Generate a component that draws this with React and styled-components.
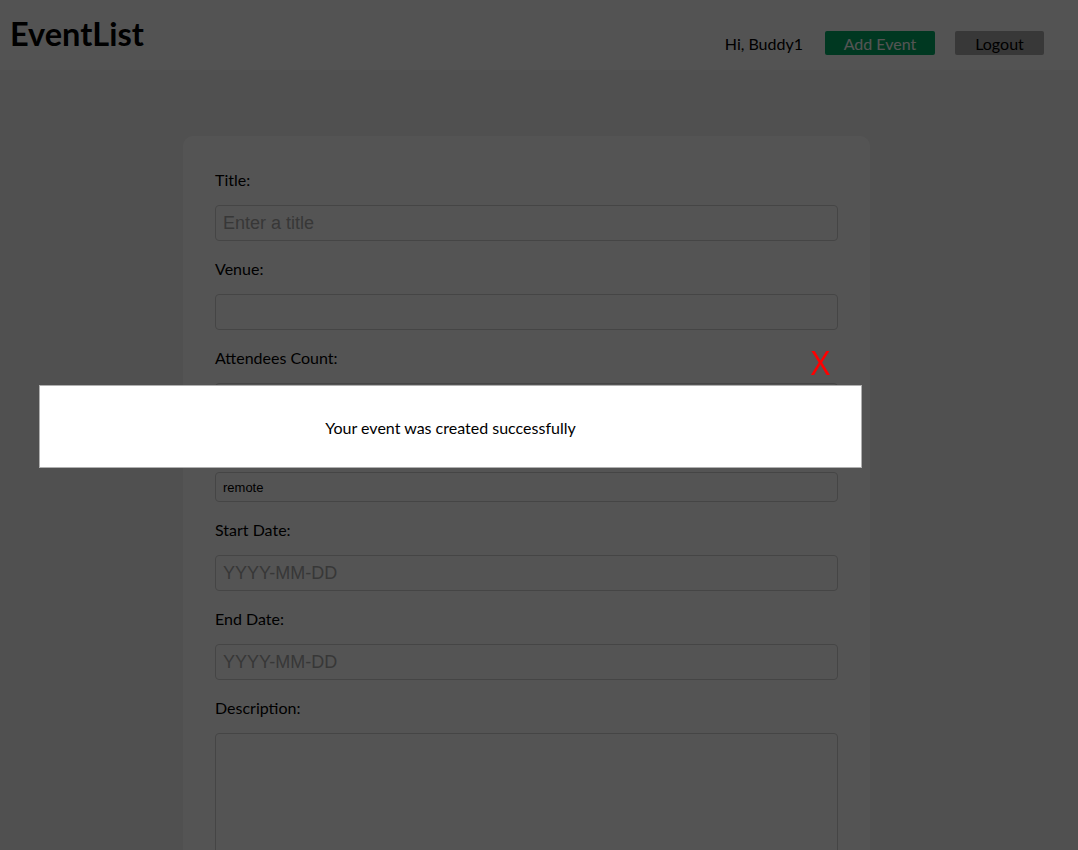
import React, { useState } from "react";
import styled, { createGlobalStyle } from "styled-components";

const GlobalStyle = createGlobalStyle`
  body {
    margin: 0;
    background-color: #f1f1f1;
    font-family: "Segoe UI", Lato, "Noto Sans", sans-serif;
    color: #000;
  }
`;

const Header = styled.header`
  height: 70px;
  background-color: #fafafa;
  display: flex;
  justify-content: space-between;
  align-items: flex-start;
  padding: 0 34px 0 10px;
  box-sizing: border-box;
`;

const Logo = styled.h1`
  margin: 14px 0 0;
  font-size: 32.5px;
  font-weight: bold;
  line-height: 40px;
`;

const Nav = styled.nav`
  display: flex;
  align-items: center;
  margin-top: 31px;
  font-size: 16px;
`;

const Greeting = styled.span`
  margin-right: 22px;
`;

const NavButton = styled.button`
  height: 24px;
  width: ${(p) => p.$width}px;
  margin-left: ${(p) => p.$gap || 0}px;
  border: none;
  border-radius: 2px;
  font-family: inherit;
  font-size: 16px;
  padding: 0;
  cursor: pointer;
  background-color: ${(p) => (p.$primary ? "#00ab66" : "#aaaaaa")};
  color: ${(p) => (p.$primary ? "#fff" : "#000")};
`;

const Main = styled.main`
  padding: 66px 0 0 183px;
`;

const FormCard = styled.form`
  width: 687px;
  box-sizing: border-box;
  background-color: #fff;
  border-radius: 10px;
  padding: 34px 32px 40px;
`;

const Field = styled.div`
  display: flex;
  flex-direction: column;
  margin-bottom: 18px;
`;

const Label = styled.label`
  font-size: 16px;
  line-height: 20px;
  margin-bottom: 15px;
`;

const Input = styled.input`
  height: ${(p) => (p.$small ? 30 : 36)}px;
  box-sizing: border-box;
  border: 1px solid #d0d0d0;
  border-radius: 4px;
  padding: 0 7px;
  font-family: "Liberation Sans", Arial, sans-serif;
  font-size: ${(p) => (p.$small ? 13 : 18)}px;
  color: #000;
  background: #fff;
  &::placeholder {
    color: #a8a8a8;
  }
`;

const TextArea = styled.textarea`
  height: 160px;
  box-sizing: border-box;
  border: 1px solid #d0d0d0;
  border-radius: 4px;
  resize: none;
`;

const Backdrop = styled.div`
  position: fixed;
  inset: 0;
  background-color: rgba(0, 0, 0, 0.67);
`;

const Modal = styled.div`
  position: fixed;
  left: 39px;
  top: 385px;
  width: 823px;
  height: 83px;
  box-sizing: border-box;
  background-color: #fff;
  border: 1px solid #b0b0b0;
  display: flex;
  align-items: center;
  justify-content: center;
  font-size: 16px;
  padding-top: 2px;
`;

const CloseX = styled.span`
  position: absolute;
  top: -45px;
  right: 31px;
  color: #ff0000;
  font-family: "Noto Sans", sans-serif;
  font-size: 33px;
  line-height: 44px;
  cursor: pointer;
`;

const fields = [
  { label: "Title:", placeholder: "Enter a title" },
  { label: "Venue:" },
  { label: "Attendees Count:" },
  { label: "Type:", value: "remote", small: true },
  { label: "Start Date:", placeholder: "YYYY-MM-DD" },
  { label: "End Date:", placeholder: "YYYY-MM-DD" },
];

const App = () => {
  const [showModal, setShowModal] = useState(true);

  return (
    <>
      <GlobalStyle />
      <Header>
        <Logo>EventList</Logo>
        <Nav>
          <Greeting>Hi, Buddy1</Greeting>
          <NavButton $primary $width={110}>Add Event</NavButton>
          <NavButton $width={89} $gap={20}>Logout</NavButton>
        </Nav>
      </Header>
      <Main>
        <FormCard>
          {fields.map((f) => (
            <Field key={f.label}>
              <Label>{f.label}</Label>
              <Input
                $small={f.small}
                placeholder={f.placeholder}
                defaultValue={f.value}
              />
            </Field>
          ))}
          <Field>
            <Label>Description:</Label>
            <TextArea />
          </Field>
        </FormCard>
      </Main>
      {showModal && (
        <>
          <Backdrop />
          <Modal>
            <CloseX onClick={() => setShowModal(false)}>X</CloseX>
            Your event was created successfully
          </Modal>
        </>
      )}
    </>
  );
};

export default App;
